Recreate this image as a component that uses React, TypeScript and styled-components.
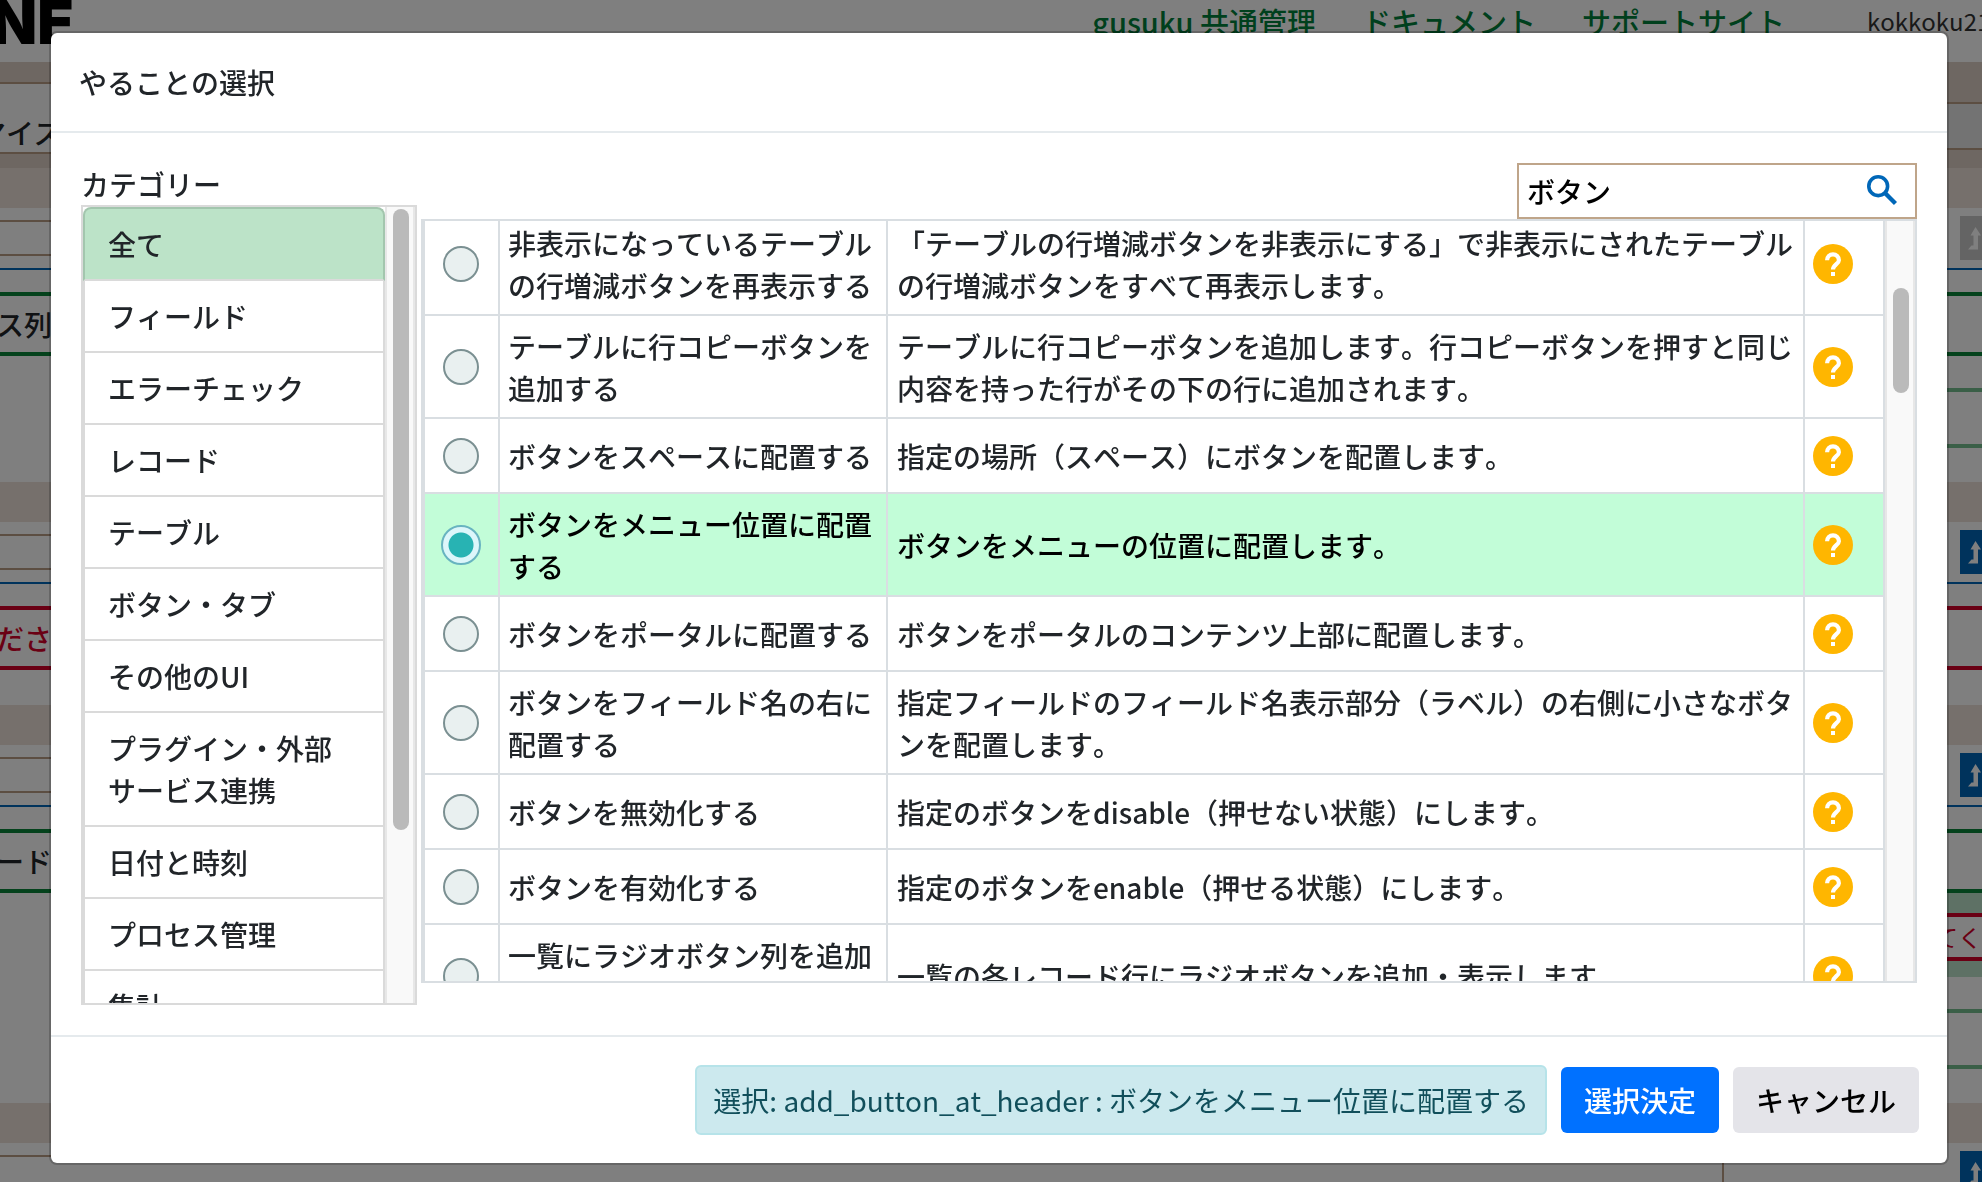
import React, { useLayoutEffect, useRef, useState } from 'react';
import styled, { createGlobalStyle } from 'styled-components';

const GlobalStyle = createGlobalStyle`
  *, *::before, *::after { box-sizing: border-box; }
  body {
    margin: 0;
    overflow: hidden;
    color: #212529;
    background: #fff;
    font: 500 28px/42px "Noto Sans CJK JP", "Noto Sans", sans-serif;
    font-kerning: none;
  }
  button, input { font: inherit; font-kerning: none; }
`;

/* ---------- page behind the dialog ---------- */

const Page = styled.div`
  height: 100vh;
  overflow: hidden;
`;

const TopBar = styled.header`
  display: flex;
  align-items: center;
  justify-content: space-between;
  height: 62px;
  overflow: hidden;
`;

const Logo = styled.div`
  display: flex;
  justify-content: flex-end;
  width: 74px;
  height: 62px;
  font: 900 60px/44px Inter, sans-serif;
  color: #000;
`;

const Nav = styled.nav`
  display: flex;
  gap: 46px;
  height: 62px;
  white-space: nowrap;
`;

const NavLink = styled.a`
  color: #00803a;
  font-size: 29px;
  text-decoration: none;
`;

const Account = styled.span`
  width: 115px;
  margin-left: 36px;
  font-size: 24px;
  font-weight: 400;
  color: #333;
`;

const TabStrip = styled.div`
  display: flex;
  align-items: flex-start;
  justify-content: space-between;
  height: 106px;
  padding-top: 20px;
  background: #dccec4;
`;

const Tab = styled.div`
  display: flex;
  align-items: center;
  justify-content: flex-end;
  width: 62px;
  height: 72px;
  padding-top: 28px;
  border: solid #b89c84;
  border-width: 2px 0;
  background: #fafafa;
  white-space: nowrap;
`;

const TabAction = styled.div`
  width: 120px;
  height: 48px;
  margin-top: 20px;
  border: solid #b89c84;
  border-width: 2px 0;
  background: #e6e6e6;
`;

const Card = styled.section<{ $height: number }>`
  height: ${(p) => p.$height}px;
  border-top: 40px solid #ece0d9;
`;

const CardHead = styled.div`
  display: flex;
  align-items: center;
  justify-content: space-between;
  height: 62px;
  border-bottom: 2px solid #0067b8;
`;

const CardField = styled.div`
  width: 1724px;
  height: 36px;
  border: 2px solid #b89c84;
  border-left: 0;
`;

const MoveButton = styled.button<{ $disabled?: boolean }>`
  width: 22px;
  height: 44px;
  padding: 0;
  border: 0;
  overflow: hidden;
  color: #fff;
  background: ${(p) => (p.$disabled ? '#c8c8c8' : '#0067b8')};
  svg { display: block; margin-left: 7px; }
`;

const tones = { green: '#088538', red: '#d40028' };

const Notice = styled.div<{ $tone: keyof typeof tones }>`
  display: flex;
  align-items: center;
  height: 64px;
  margin-top: 22px;
  border: solid ${(p) => tones[p.$tone]};
  border-width: 4px 0;
  color: ${(p) => (p.$tone === 'red' ? tones.red : '#212529')};
  white-space: nowrap;
`;

const NoticeText = styled.span`
  display: flex;
  justify-content: flex-end;
  width: 52px;
`;

const NestedNotice = styled.div`
  display: flex;
  justify-content: flex-end;
  height: 84px;
  margin-left: 60px;
  padding: 20px 0 16px;
  background: #bce3ca;
`;

const NestedError = styled.div`
  display: flex;
  flex: 1;
  align-items: center;
  justify-content: flex-end;
  border: solid #d40028;
  border-width: 4px 0;
  background: #fff;
  color: #d40028;
  font-size: 24px;
  font-weight: 400;
`;

const Slot = styled.div`
  height: 60px;
  margin: 32px 0 0 60px;
  border: 4px solid #74be8f;
  border-right-width: 0;
`;

/* ---------- dialog ---------- */

const Backdrop = styled.div`
  position: fixed;
  inset: 0;
  padding: 31px 33px 17px 49px;
  background: rgba(0, 0, 0, 0.5);
`;

const Dialog = styled.div`
  border: 2px solid rgba(0, 0, 0, 0.2);
  border-radius: 8px;
  background: #fff;
  background-clip: padding-box;
`;

const DialogHeader = styled.header`
  padding: 28px;
  border-bottom: 2px solid #e5eaed;
`;

const Title = styled.h1`
  margin: 0;
  font-size: 28px;
  font-weight: inherit;
  line-height: 42px;
`;

const DialogBody = styled.div`
  display: flex;
  gap: 4px;
  padding: 30px;
`;

const CategoryColumn = styled.div`
  flex: none;
  width: 336px;
`;

const CategoryBox = styled.div`
  display: flex;
  height: 800px;
  border: 2px solid #dadada;
`;

const CategoryList = styled.ul`
  flex: 1;
  margin: 0;
  padding: 0;
  overflow: hidden;
  list-style: none;
`;

const CategoryButton = styled.button<{ $active: boolean }>`
  display: block;
  width: 100%;
  padding: 14px 24px 14px 23px;
  border: 2px solid #dadada;
  border-top-width: ${(p) => (p.$active ? 2 : 0)}px;
  border-color: ${(p) => (p.$active ? '#a3c6ae #a3c6ae #dadada' : '#dadada')};
  border-radius: ${(p) => (p.$active ? '8px 8px 0 0' : 0)};
  background: ${(p) => (p.$active ? '#bce3c8' : '#fff')};
  color: #212529;
  text-align: left;
`;

const Track = styled.div`
  flex: none;
  display: flex;
  justify-content: center;
  width: 30px;
  border: solid #e7e7e7;
  border-width: 0 2px;
  background: #f9f9f9;
`;

const Thumb = styled.div<{ $top: number; $size: number }>`
  width: 16px;
  height: ${(p) => p.$size}px;
  margin: ${(p) => p.$top}px 0 0 2px;
  border-radius: 8px;
  background: #bababa;
`;

const ResultColumn = styled.div`
  flex: 1;
  display: flex;
  flex-direction: column;
  min-width: 0;
`;

const SearchBox = styled.label`
  display: flex;
  align-items: center;
  align-self: flex-end;
  width: 400px;
  height: 56px;
  padding: 0 18px 0 8px;
  border: 2px solid #bfa58a;
`;

const SearchInput = styled.input`
  flex: 1;
  min-width: 0;
  height: 42px;
  padding: 0;
  border: 0;
  outline: 0;
  color: #000;
  background: transparent;
`;

const ResultBox = styled.div`
  display: flex;
  height: 764px;
  border: 2px solid #d9dee2;
`;

const ResultScroll = styled.div`
  flex: 1;
  min-width: 0;
  overflow-y: auto;
  scrollbar-width: none;
`;

const ResultTable = styled.table`
  width: 100%;
  table-layout: fixed;
  border-collapse: separate;
  border-spacing: 0;
  border-left: 2px solid #d9dee2;
`;

const Row = styled.tr<{ $selected: boolean }>`
  height: 75px;
  background: ${(p) => (p.$selected ? '#c2fdd8' : '#fff')};
  color: ${(p) => (p.$selected ? '#000' : '#212529')};
`;

const Cell = styled.td`
  padding: 8px;
  border: solid #d9dee2;
  border-width: 0 2px 2px 0;
  vertical-align: middle;
`;

const NameCell = styled(Cell)`
  padding-top: 9px;
`;

const TextCell = styled(Cell)`
  padding-left: 9px;
`;

const ControlCell = styled(Cell)`
  padding: 0 1px 0 0;
`;

const Radio = styled.input`
  appearance: none;
  display: block;
  width: 36px;
  height: 36px;
  margin: 0 auto;
  border: 2px solid #7b9092;
  border-radius: 50%;
  background: #e9f0f0;
  &:checked {
    width: 40px;
    height: 40px;
    border-color: #68b4c0;
    background: radial-gradient(circle, #28b3b3 0 12px, #dcf6fa 13px);
  }
`;

const HelpButton = styled.button`
  display: block;
  padding: 0;
  border: 0;
  background: none;
  svg { display: block; }
`;

const DialogFooter = styled.footer`
  display: flex;
  align-items: center;
  justify-content: flex-end;
  gap: 14px;
  height: 128px;
  padding: 0 28px;
  border-top: 2px solid #e5eaed;
`;

const Selection = styled.output`
  padding: 12px 16px;
  border: 2px solid #b6e3e9;
  border-radius: 6px;
  background: #cce9ee;
  color: #114f5b;
  font-weight: 400;
  white-space: nowrap;
`;

const Action = styled.button<{ $primary?: boolean }>`
  height: 66px;
  padding: 0 23px;
  border: 0;
  border-radius: 6px;
  background: ${(p) => (p.$primary ? '#0071ff' : '#e4e4e9')};
  color: ${(p) => (p.$primary ? '#fff' : '#000')};
`;

const categories = [
  '全て',
  'フィールド',
  'エラーチェック',
  'レコード',
  'テーブル',
  'ボタン・タブ',
  'その他のUI',
  'プラグイン・外部サービス連携',
  '日付と時刻',
  'プロセス管理',
  '集計',
];

const actions = [
  {
    id: 'show_table_buttons',
    name: '非表示になっているテーブルの行増減ボタンを再表示する',
    text: '「テーブルの行増減ボタンを非表示にする」で非表示にされたテーブルの行増減ボタンをすべて再表示します。',
  },
  {
    id: 'add_row_copy_button',
    name: 'テーブルに行コピーボタンを追加する',
    text: 'テーブルに行コピーボタンを追加します。行コピーボタンを押すと同じ内容を持った行がその下の行に追加されます。',
  },
  {
    id: 'add_button_at_space',
    name: 'ボタンをスペースに配置する',
    text: '指定の場所（スペース）にボタンを配置します。',
  },
  {
    id: 'add_button_at_header',
    name: 'ボタンをメニュー位置に配置する',
    text: 'ボタンをメニューの位置に配置します。',
  },
  {
    id: 'add_button_at_portal',
    name: 'ボタンをポータルに配置する',
    text: 'ボタンをポータルのコンテンツ上部に配置します。',
  },
  {
    id: 'add_button_at_field',
    name: 'ボタンをフィールド名の右に配置する',
    text: '指定フィールドのフィールド名表示部分（ラベル）の右側に小さなボタンを配置します。',
  },
  {
    id: 'disable_button',
    name: 'ボタンを無効化する',
    text: '指定のボタンをdisable（押せない状態）にします。',
  },
  {
    id: 'enable_button',
    name: 'ボタンを有効化する',
    text: '指定のボタンをenable（押せる状態）にします。',
  },
  {
    id: 'add_radio_column',
    name: '一覧にラジオボタン列を追加する',
    text: '一覧の各レコード行にラジオボタンを追加・表示します。',
  },
];

function MoveIcon() {
  return (
    <svg width="28" height="44" viewBox="0 0 28 44" fill="currentColor">
      <path d="M8.500 11 L14 19.500 H11 V33.500 H1 L4.500 29.500 H6.500 V19.500 H3.500 Z" />
    </svg>
  );
}

function SearchIcon() {
  return (
    <svg width="30" height="32" viewBox="0 0 30 32" fill="none" stroke="#0067b8">
      <circle cx="11.200" cy="11.200" r="9.400" strokeWidth="3.600" />
      <path d="M17.500 17.500 L28.500 28.500" strokeWidth="4.400" />
    </svg>
  );
}

function HelpIcon() {
  return (
    <svg width="40" height="40" viewBox="0 0 40 40" fill="none">
      <circle cx="20" cy="20" r="20" fill="#ffb600" />
      <path
        d="M14.100 16.200 A5.900 5.900 0 1 1 25.900 16.200 C25.900 19.800 20 20.600 20 25.600"
        stroke="#fff"
        strokeWidth="4.200"
      />
      <rect x="18" y="28" width="4" height="4" fill="#fff" />
    </svg>
  );
}

function Background() {
  return (
    <Page aria-hidden="true">
      <TopBar>
        <Logo>NE</Logo>
        <Nav>
          <NavLink href="#common">gusuku 共通管理</NavLink>
          <NavLink href="#docs">ドキュメント</NavLink>
          <NavLink href="#support">サポートサイト</NavLink>
          <Account>kokkoku21</Account>
        </Nav>
      </TopBar>
      <TabStrip>
        <Tab>マイズ</Tab>
        <TabAction />
      </TabStrip>
      <Card $height={314}>
        <CardHead>
          <CardField />
          <MoveButton $disabled><MoveIcon /></MoveButton>
        </CardHead>
        <Notice $tone="green"><NoticeText>ス列</NoticeText></Notice>
        <Slot />
      </Card>
      <Card $height={223}>
        <CardHead>
          <CardField />
          <MoveButton><MoveIcon /></MoveButton>
        </CardHead>
        <Notice $tone="red"><NoticeText>ださ</NoticeText></Notice>
      </Card>
      <Card $height={398}>
        <CardHead>
          <CardField />
          <MoveButton><MoveIcon /></MoveButton>
        </CardHead>
        <Notice $tone="green"><NoticeText>ード</NoticeText></Notice>
        <NestedNotice><NestedError>てく</NestedError></NestedNotice>
        <Slot />
      </Card>
      <Card $height={200}>
        <CardHead>
          <CardField />
          <MoveButton><MoveIcon /></MoveButton>
        </CardHead>
      </Card>
    </Page>
  );
}

export default function App() {
  const scrollRef = useRef<HTMLDivElement>(null);
  const [category, setCategory] = useState(categories[0]);
  const [query, setQuery] = useState('ボタン');
  const [selectedId, setSelectedId] = useState('add_button_at_header');
  const selected = actions.find((a) => a.id === selectedId)!;

  useLayoutEffect(() => {
    if (scrollRef.current) scrollRef.current.scrollTop = 8;
  }, []);

  return (
    <>
      <GlobalStyle />
      <Background />
      <Backdrop>
        <Dialog role="dialog" aria-modal="true" aria-labelledby="dialog-title">
          <DialogHeader>
            <Title id="dialog-title">やることの選択</Title>
          </DialogHeader>
          <DialogBody>
            <CategoryColumn>
              <div>カテゴリー</div>
              <CategoryBox>
                <CategoryList>
                  {categories.map((c) => (
                    <li key={c}>
                      <CategoryButton $active={c === category} onClick={() => setCategory(c)}>
                        {c}
                      </CategoryButton>
                    </li>
                  ))}
                </CategoryList>
                <Track><Thumb $top={2} $size={621} /></Track>
              </CategoryBox>
            </CategoryColumn>
            <ResultColumn>
              <SearchBox>
                <SearchInput
                  aria-label="検索"
                  value={query}
                  onChange={(e) => setQuery(e.target.value)}
                />
                <SearchIcon />
              </SearchBox>
              <ResultBox>
                <ResultScroll ref={scrollRef}>
                  <ResultTable>
                    <colgroup>
                      <col style={{ width: 75 }} />
                      <col style={{ width: 388 }} />
                      <col />
                      <col style={{ width: 80 }} />
                    </colgroup>
                    <tbody>
                      {actions.map((a) => (
                        <Row key={a.id} $selected={a.id === selectedId}>
                          <ControlCell>
                            <Radio
                              type="radio"
                              name="action"
                              aria-label={a.name}
                              checked={a.id === selectedId}
                              onChange={() => setSelectedId(a.id)}
                            />
                          </ControlCell>
                          <NameCell>{a.name}</NameCell>
                          <TextCell>{a.text}</TextCell>
                          <Cell>
                            <HelpButton aria-label="ヘルプ"><HelpIcon /></HelpButton>
                          </Cell>
                        </Row>
                      ))}
                    </tbody>
                  </ResultTable>
                </ResultScroll>
                <Track><Thumb $top={67} $size={105} /></Track>
              </ResultBox>
            </ResultColumn>
          </DialogBody>
          <DialogFooter>
            <Selection>選択: {selected.id} : {selected.name}</Selection>
            <Action $primary>選択決定</Action>
            <Action>キャンセル</Action>
          </DialogFooter>
        </Dialog>
      </Backdrop>
    </>
  );
}
